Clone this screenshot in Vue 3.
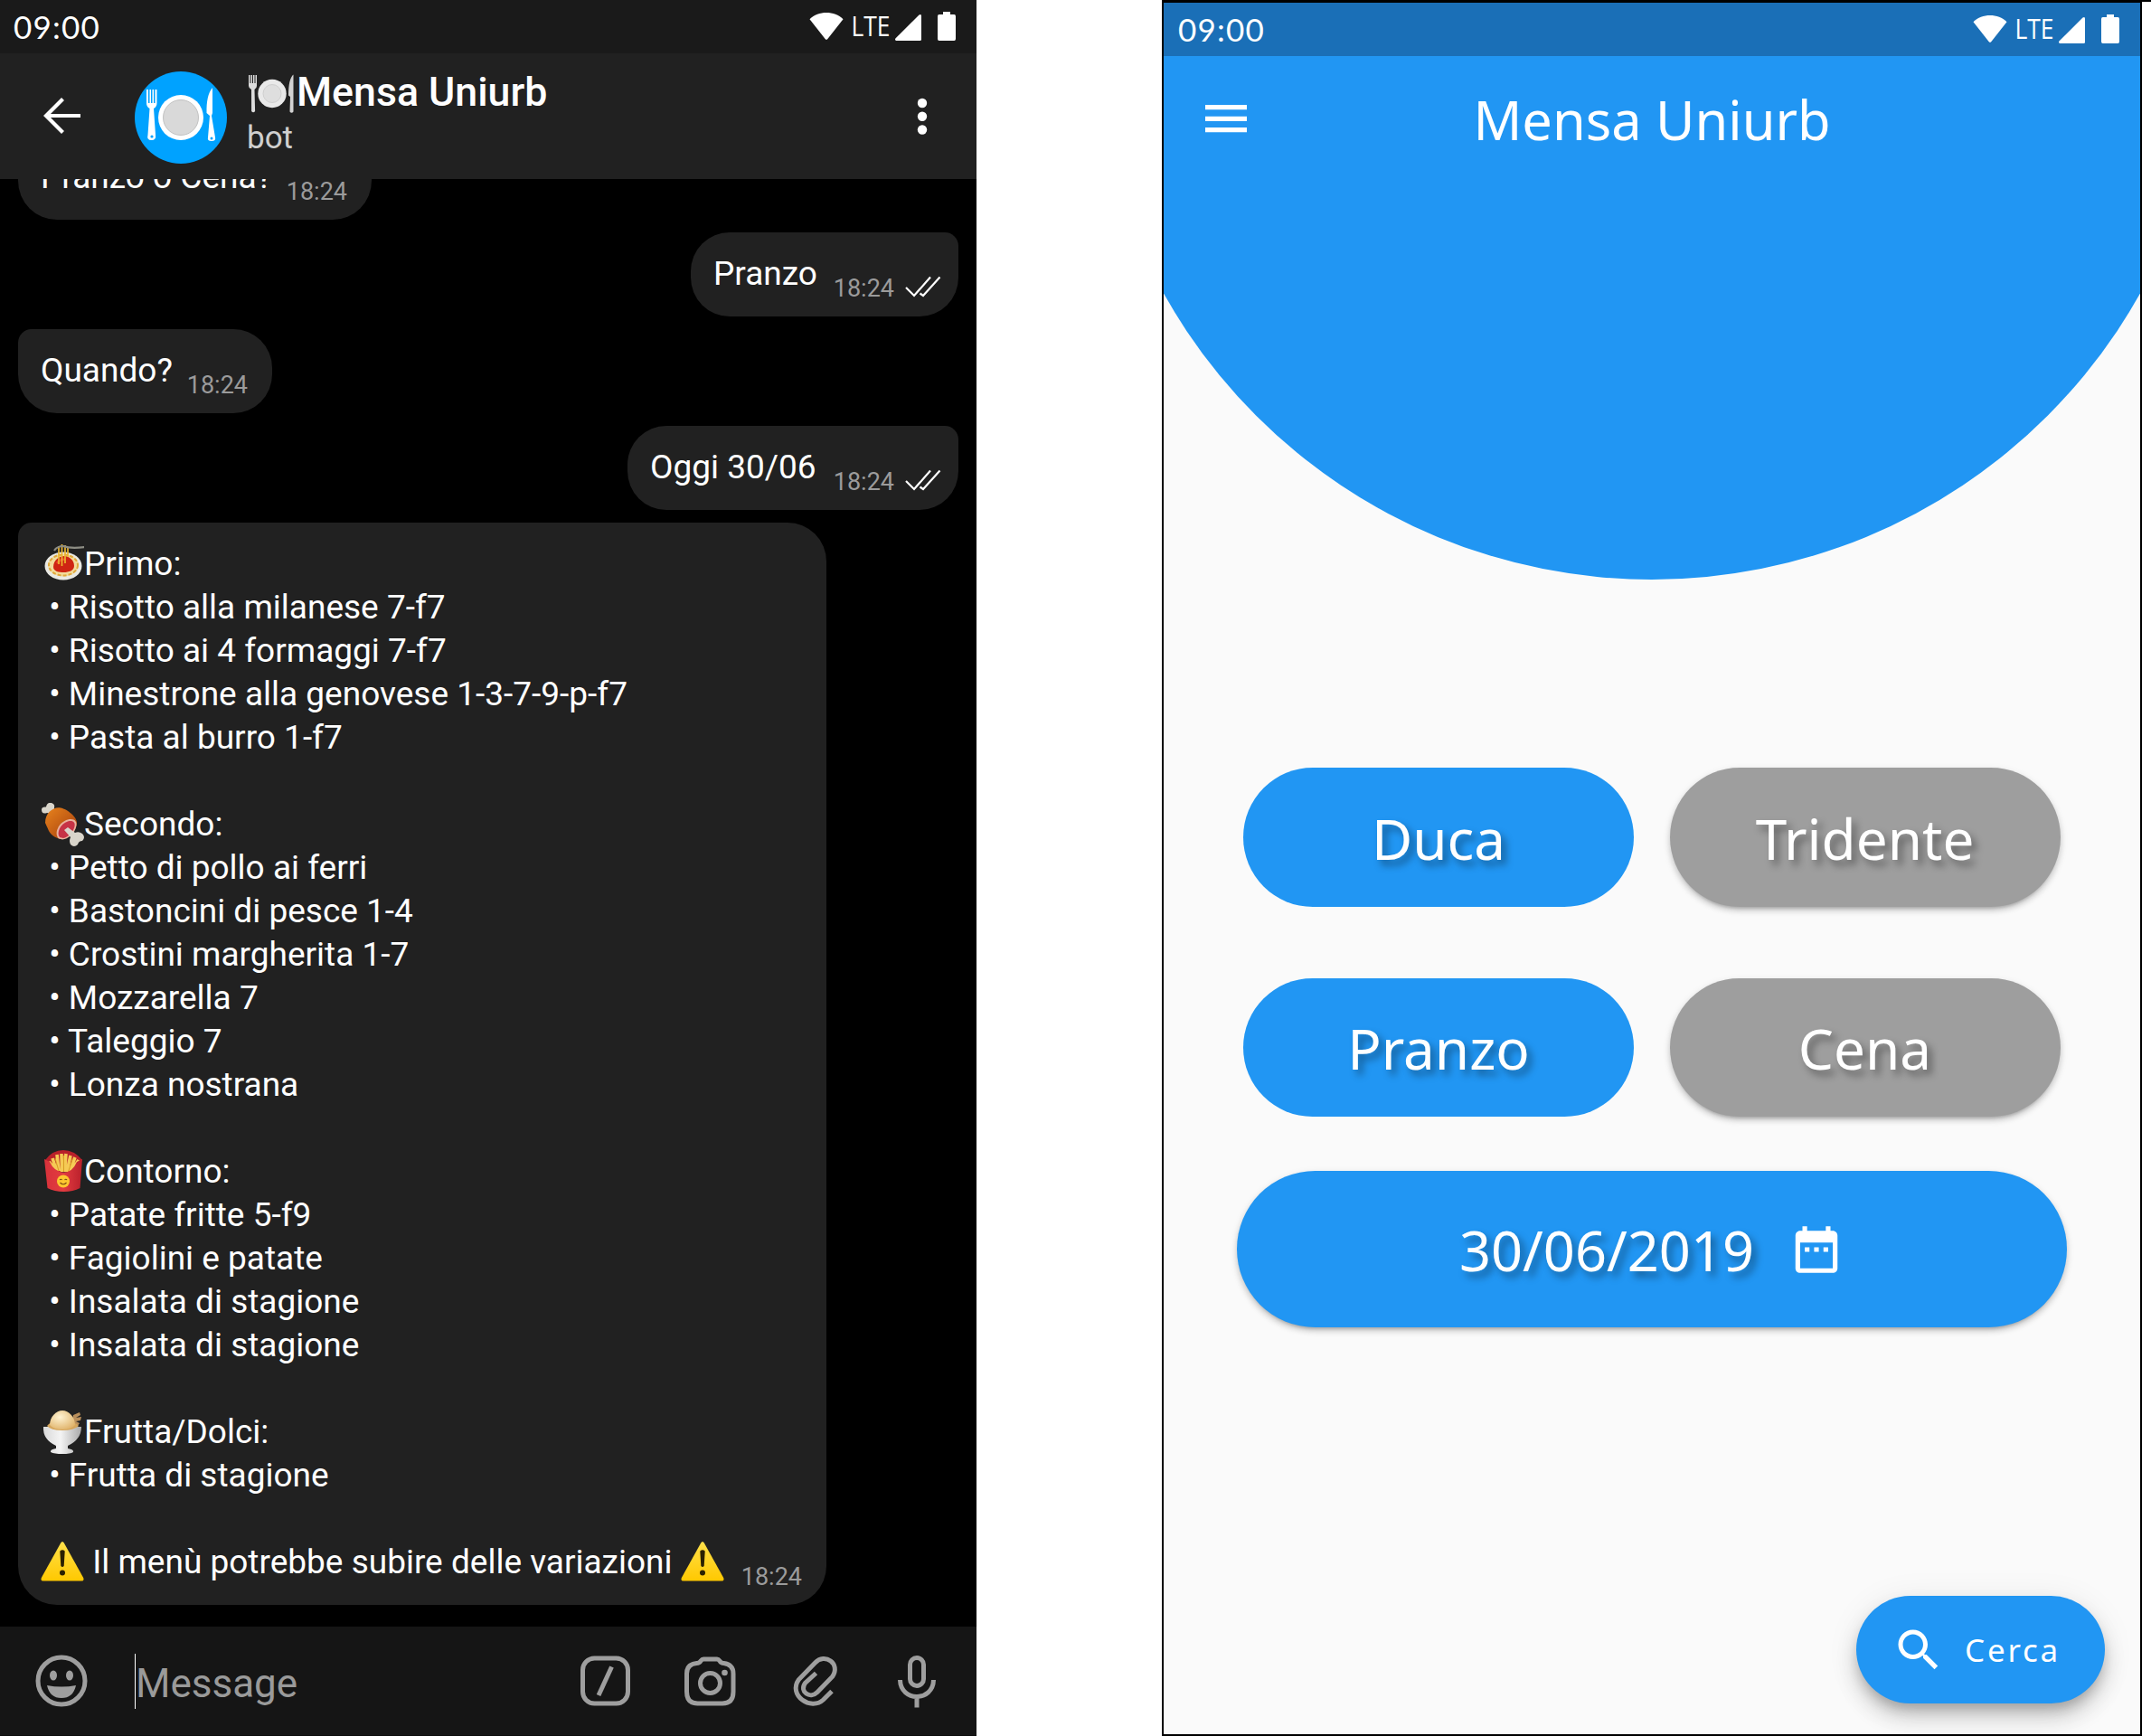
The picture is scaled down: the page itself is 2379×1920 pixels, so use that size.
<script setup>
const sections = [
  {
    icon: 'pasta',
    title: 'Primo:',
    items: [
      'Risotto alla milanese 7-f7',
      'Risotto ai 4 formaggi 7-f7',
      'Minestrone alla genovese 1-3-7-9-p-f7',
      'Pasta al burro 1-f7',
    ],
  },
  {
    icon: 'meat',
    title: 'Secondo:',
    items: [
      'Petto di pollo ai ferri',
      'Bastoncini di pesce 1-4',
      'Crostini margherita 1-7',
      'Mozzarella 7',
      'Taleggio 7',
      'Lonza nostrana',
    ],
  },
  {
    icon: 'fries',
    title: 'Contorno:',
    items: ['Patate fritte 5-f9', 'Fagiolini e patate', 'Insalata di stagione', 'Insalata di stagione'],
  },
  { icon: 'egg', title: 'Frutta/Dolci:', items: ['Frutta di stagione'] },
]
const messages = [
  { text: 'Pranzo o Cena?', mine: false, width: 391 },
  { text: 'Pranzo', mine: true, width: 296 },
  { text: 'Quando?', mine: false, width: 281 },
  { text: 'Oggi 30/06', mine: true, width: 366 },
]
const options = [
  { label: 'Duca', on: true },
  { label: 'Tridente', on: false },
  { label: 'Pranzo', on: true },
  { label: 'Cena', on: false },
]
</script>

<template>
  <div class="page">
    <!-- shared symbols -->
    <svg class="defs" width="0" height="0">
      <defs>
        <linearGradient id="gWarn" x1="0" y1="0" x2="0" y2="1">
          <stop offset="0" stop-color="#ffe04a" /><stop offset="1" stop-color="#ffc800" />
        </linearGradient>
        <linearGradient id="gMeat" x1="0" y1="0" x2="1" y2="1">
          <stop offset="0" stop-color="#e8831d" /><stop offset="1" stop-color="#a33c0c" />
        </linearGradient>
        <linearGradient id="gBox" x1="0" y1="0" x2="1" y2="0">
          <stop offset="0" stop-color="#d8313a" /><stop offset="0.5" stop-color="#e23b40" /><stop offset="1" stop-color="#b9202b" />
        </linearGradient>
        <linearGradient id="gCup" x1="0" y1="0" x2="1" y2="0">
          <stop offset="0" stop-color="#d9d9d9" /><stop offset="0.45" stop-color="#f4f4f4" /><stop offset="1" stop-color="#a9a9a9" />
        </linearGradient>
        <radialGradient id="gEgg" cx="0.4" cy="0.35" r="0.7">
          <stop offset="0" stop-color="#fff3d2" /><stop offset="1" stop-color="#e0b46c" />
        </radialGradient>
        <symbol id="status" viewBox="0 0 180 59">
          <path d="M15.500 21.200C25 11.500 43 11.500 52.500 21.200L35.400 43Q34 44.700 32.600 43Z" />
          <text x="61.500" y="40.300" textLength="43" lengthAdjust="spacingAndGlyphs" class="lte">LTE</text>
          <path d="M111.200 45Q109.300 44.500 110.400 42.500L136.500 16.500Q139 15 139 17.500V43.500Q139 45 137.500 45Z" />
          <path d="M163 13h8v3h4.300q1.700 0 1.700 2v25q0 2-1.700 2h-16.600q-1.700 0-1.700-2v-25q0-2 1.700-2h4.300z" />
        </symbol>
        <symbol id="pasta" viewBox="0 0 48 48">
          <ellipse cx="25" cy="26" rx="20.500" ry="15.500" fill="#e9e9e4" />
          <ellipse cx="25" cy="25" rx="17" ry="12.500" fill="#f3dc9c" />
          <ellipse cx="25" cy="25" rx="16" ry="11.500" fill="none" stroke="#e0a83c" stroke-width="2" stroke-dasharray="4 2" />
          <path d="M14 27C14 19 21 15 26 15s11 4 11 11c0 5-6 7-11.500 7S14 32 14 27Z" fill="#cf2413" />
          <path d="M18 23q4-5 9-4" fill="none" stroke="#ee4a2c" stroke-width="2.500" />
          <path d="M20 4v20M23.500 2v24M27 3v20M30 5v11" fill="none" stroke="#ecb62f" stroke-width="1.700" />
          <path d="M15 9q3-5 10-5 8 3 24 1" fill="none" stroke="#8d8d84" stroke-width="2.200" />
        </symbol>
        <symbol id="meat" viewBox="0 0 48 48">
          <path d="M12 12L7 11Q1 13 1 7.500 1 4 6 4.500 7-1 12 0q4 1.500 3 5l0 6z" fill="#d9d5cb" />
          <path d="M5 22C5 11 14 4 22 5.500S40 16 40 22 35 33 28 39C22 42 13 38 9 31Z" fill="url(#gMeat)" />
          <path d="M20 39.500C14 34 20 21 30 18.500 37 17 40 20 39.500 25 38 34 30 40 24 40.500Z" fill="#e9b29d" />
          <path d="M21 38C17 33 22 23 30 20.500 36 19 38.500 22 37.500 26 36 33 30 38 25 39Z" fill="#c73346" />
          <path d="M26 30l4-3 8 6q4-2 8 1 4 4 0 8-4 0-5 4-4 4-8 0-2-4 0-8z" fill="#d9d5cb" />
        </symbol>
        <symbol id="fries" viewBox="0 0 48 48">
          <path d="M5 11Q13 0 25 0T46 11L38 24H11Z" fill="#b8202a" />
          <path d="M13 9l5 15M18 5l2 18M23 4l.5 20M28 4l-1.500 20M33 6l-4 18M38 8l-6 16M42 11l-8 12M9 13l9 11" stroke="#f5ca55" stroke-width="3.600" />
          <path d="M16 9l4 14M25.500 6v18M35.500 9l-5 15" stroke="#d89d24" stroke-width="1" />
          <path d="M4 10L10 13Q15 24 25 24.500T40 13L46 10 43.500 42Q36 46 25.500 46T7.500 42Z" fill="url(#gBox)" />
          <circle cx="25" cy="34.500" r="7" fill="#fdc62f" />
          <path d="M21 33q1.300-1.500 2.600 0M26.500 33q1.300-1.500 2.600 0M21.500 36q3.500 3.500 7 0" fill="none" stroke="#7b4a10" stroke-width="1.100" />
        </symbol>
        <symbol id="egg" viewBox="0 0 48 48">
          <path d="M36 5l7-3 1 3-5 3 6-1-1 4-5 1 4 2-2 3-6-2z" fill="#b98f5b" />
          <path d="M3 18q-1 14 14 21v3q-7 1-6 4 4 2 13 2t12-2q1-3-6-4v-3q15-7 15-21z" fill="url(#gCup)" />
          <path d="M7 17q3-5 17-5t18 5q-5 5-18 5T7 17Z" fill="#d6a65b" />
          <path d="M10 16C10 7 17 0 24 0s14 7 14 16q-4 5-14 5T10 16Z" fill="url(#gEgg)" />
        </symbol>
        <symbol id="warn" viewBox="0 0 48 48">
          <path d="M22.200 2.500Q24-.5 25.800 2.500L47.200 41Q48.500 44.500 45 44.500H3Q-.5 44.500.8 41Z" fill="url(#gWarn)" />
          <path d="M21.300 11.500q2.700-2.600 5.400 0l-1 16.500q-1.700 2-3.400 0z" fill="#2b2100" />
          <circle cx="24" cy="35.500" r="3" fill="#2b2100" />
        </symbol>
        <symbol id="plate" viewBox="0 0 52 44">
          <path d="M1 2h1.500v9h1V2H5v9h1V2h1.500v9h1V2H10v12q0 2.500-2.500 4l.6 24q-2 2.500-4 0L4 18Q1 16.500 1 14Z" fill="#dcdcdc" />
          <circle cx="27" cy="22.500" r="15.700" fill="#e9e9e9" />
          <circle cx="27" cy="22.500" r="10" fill="#dedede" stroke="#cfcfcf" stroke-width="1" />
          <path d="M50.500 1.500v41q-2 2.500-4 0l.5-16.500-2-1.500Q45 6 50.500 1.500Z" fill="#d2d2d2" />
        </symbol>
      </defs>
    </svg>

    <section class="phone chat">
      <div class="status">
        <span class="clock">09:00</span>
        <svg class="sysicons"><use href="#status" /></svg>
      </div>

      <header class="head">
        <svg class="back" viewBox="0 0 42 42">
          <path d="M41 21H4M21.500 2.500L3 21l18.500 18.500" fill="none" stroke="#fff" stroke-width="4.200" />
        </svg>
        <svg class="avatar" viewBox="0 0 102 102">
          <circle cx="51" cy="51" r="51" fill="#00a2ff" />
          <path d="M13 20h2v15h1.500V20h1.500v15h1.500V20H21v15h1.500V20h2v15q0 4-3.500 6l2 29q1 6-4.500 6t-4-6l2-29Q13 39 13 35Z" fill="#fff" />
          <circle cx="19" cy="72" r="1.600" fill="#00a2ff" />
          <circle cx="51" cy="51" r="25" fill="#fff" />
          <circle cx="51" cy="51" r="19.500" fill="#d9d9d9" stroke="#c2c2c2" stroke-width="1" />
          <path d="M86 18V46l-1 3 4 24q1 4-4 4t-4-4l2-24-3.500-3Q79 26 86 18Z" fill="#fff" />
          <circle cx="85" cy="74" r="1.500" fill="#00a2ff" />
        </svg>
        <div class="who">
          <h1><svg class="plate"><use href="#plate" /></svg>Mensa Uniurb</h1>
          <p>bot</p>
        </div>
        <svg class="more" viewBox="0 0 12 42">
          <circle cx="6" cy="6" r="5.200" /><circle cx="6" cy="20.800" r="5.200" /><circle cx="6" cy="35.500" r="5.200" />
        </svg>
      </header>

      <main class="log">
        <div
          v-for="m in messages"
          :key="m.text"
          class="bubble short"
          :class="{ mine: m.mine }"
          :style="{ width: m.width + 'px' }"
        >
          <span class="line">{{ m.text }}</span>
          <time>18:24</time>
          <svg v-if="m.mine" class="ticks" viewBox="0 0 40 24">
            <path d="M1 13l9 9L28 1.500M16.500 19.500l3.500 2.500L38.500 1.500" fill="none" stroke="#fff" stroke-width="2.200" />
          </svg>
        </div>
        <div class="bubble menu">
          <div v-for="s in sections" :key="s.title" class="group">
            <div class="line"><svg class="emo"><use :href="'#' + s.icon" /></svg>{{ s.title }}</div>
            <div v-for="(it, i) in s.items" :key="i" class="line">{{ ' • ' + it }}</div>
          </div>
          <div class="last">
            <div class="line"><svg class="emo"><use href="#warn" /></svg>{{ ' Il menù potrebbe subire delle variazioni ' }}<svg class="emo"><use href="#warn" /></svg></div>
            <time>18:24</time>
          </div>
        </div>
      </main>

      <footer class="composer">
        <svg class="ico" viewBox="0 0 60 60">
          <circle cx="30" cy="30" r="26" fill="none" stroke="#9e9e9e" stroke-width="5" />
          <ellipse cx="21" cy="24" rx="4" ry="5.500" /><ellipse cx="39" cy="24" rx="4" ry="5.500" />
          <path d="M14 35q16 3 32 0-3 14-16 14T14 35Z" />
        </svg>
        <div class="field">Message</div>
        <svg class="ico stroke" viewBox="0 0 60 60">
          <rect x="5.500" y="5" width="50" height="50" rx="13" /><path d="M37.500 14.500L23 46" />
        </svg>
        <svg class="ico stroke" viewBox="0 0 60 60">
          <path d="M4.500 22q0-10.500 11-11.500 3 0 4.500-2.500 1.500-2 3-2h15q1.500 0 3 2 1.500 2.500 4.500 2.500Q56 12 56 22v20q0 13-12 13H16.500Q4.500 55 4.500 42Z" />
          <circle cx="30.500" cy="32.500" r="11" /><circle cx="46.500" cy="21" r="3.300" class="dot" />
        </svg>
        <svg class="ico stroke clip" viewBox="0 0 60 60">
          <path d="M49 42.500L39.500 52C26 64.500 0 47 12.500 29.500L30.500 11C41-.5 59.500 12 49.500 26.500L33 43.500C25 51.500 12.500 43 19.500 33.500L31.500 22.500" transform="translate(0 -1)" />
        </svg>
        <svg class="ico stroke mic" viewBox="0 0 60 60">
          <rect x="22.500" y="4.500" width="15" height="31" rx="7.500" /><path d="M11.500 29C12 53.500 48 53.500 48.500 29M30 48v11.500" />
        </svg>
      </footer>
    </section>

    <section class="phone app">
      <div class="status">
        <span class="clock">09:00</span>
        <svg class="sysicons"><use href="#status" /></svg>
      </div>
      <div class="disc"></div>
      <header class="bar">
        <svg class="burger" viewBox="0 0 46 31"><path d="M0 0h46v5.300H0zM0 12.700h46v5.300H0zM0 25h46v5.300H0z" /></svg>
        <h2>Mensa Uniurb</h2>
      </header>
      <div class="grid">
        <button v-for="o in options" :key="o.label" :class="{ on: o.on }">{{ o.label }}</button>
      </div>
      <button class="date">
        <span>30/06/2019</span>
        <svg viewBox="0 0 24 24">
          <path d="M9 11H7v2h2v-2zm4 0h-2v2h2v-2zm4 0h-2v2h2v-2zm2-7h-1V2h-2v2H8V2H6v2H5c-1.110 0-1.990.9-1.990 2L3 20c0 1.100.89 2 2 2h14c1.100 0 2-.9 2-2V6c0-1.100-.9-2-2-2zm0 16H5V9h14v11z" />
        </svg>
      </button>
      <button class="fab">
        <svg viewBox="0 0 24 24">
          <path d="M15.500 14h-.79l-.28-.27C15.410 12.590 16 11.110 16 9.500 16 5.910 13.090 3 9.500 3S3 5.910 3 9.500 5.910 16 9.500 16c1.610 0 3.090-.59 4.230-1.570l.27.28v.79l5 4.990L20.490 19l-4.990-5zm-6 0C7.010 14 5 11.990 5 9.500S7.010 5 9.500 5 14 7.010 14 9.500 11.990 14 9.500 14z" />
        </svg>
        <span>Cerca</span>
      </button>
    </section>
    <div class="edge"></div>
  </div>
</template>

<style>
body { background: #fff; }
</style>

<style scoped>
.page { display: flex; width: 2379px; height: 1920px; overflow: hidden; background: #fff; }
.defs { position: absolute; }
.phone { box-sizing: border-box; display: flex; flex-direction: column; height: 1920px; overflow: hidden; }
h1, h2, p { margin: 0; font-weight: 400; }
.status { display: flex; align-items: flex-start; justify-content: space-between; height: 59px; flex: none; padding: 0 20px 0 15px; color: #fff; }
.clock { font: 35px/58px Lato, sans-serif; letter-spacing: 1.2px; }
.sysicons { width: 180px; height: 59px; fill: #fff; }
.lte { font: 31px "Open Sans", sans-serif; }

.chat { width: 1080px; background: #000; color: #fff; font-family: Roboto, sans-serif; }
.chat .status { background: #1a1a1a; }
.head { display: flex; align-items: center; height: 139px; flex: none; background: #212121; padding: 0 54px 0 48px; box-sizing: border-box; z-index: 1; }
.back { width: 42px; height: 42px; margin-top: -1px; }
.avatar { width: 102px; height: 102px; margin: 3px 0 0 59px; }
.who { margin: 0 auto 0 22px; }
.who h1 { display: flex; font-size: 44.700px; line-height: 50px; margin-top: -2px; font-weight: 500; }
.who p { font-size: 35px; line-height: 50px; margin-top: 1px; color: #cfcfcf; }
.plate { width: 52px; height: 44px; margin: 4px 2px 0 1px; }
.more { width: 12px; height: 42px; fill: #fff; }

.log { flex: 1; min-height: 0; display: flex; flex-direction: column; justify-content: flex-end; align-items: flex-start; gap: 14px; padding: 0 20px 24px; }
.bubble { box-sizing: border-box; flex: none; background: #212121; border-radius: 15px 43px 43px 43px; padding: 22px 27px 23px 25px; }
.line { display: block; height: 48px; font-size: 37px; line-height: 48px; white-space: pre; }
.short, .last { display: flex; }
.short.mine { align-self: flex-end; border-radius: 43px 15px 43px 43px; padding-right: 19px; }
time { margin: 22px 0 -10px auto; font-size: 27px; line-height: 36px; color: #9b9b9b; }
.ticks { width: 40px; height: 24px; margin: 26px 0 -4px 12px; }
.menu { width: 894px; }
.group { margin-bottom: 48px; }
.emo { width: 48px; height: 48px; vertical-align: top; }

.composer { display: flex; align-items: center; height: 121px; flex: none; box-sizing: border-box; background: #151515; border-bottom: 1px solid #0c0c0c; padding: 0 36px 0 38px; }
.ico { width: 60px; height: 60px; fill: #9e9e9e; margin-left: 56px; }
.ico:first-child { margin-left: 0; }
.mic { margin-left: 53px; }
.stroke { fill: none; stroke: #9e9e9e; stroke-width: 5; }
.stroke .dot { fill: #9e9e9e; stroke: none; }
.field { flex: 1; margin-left: 51px; height: 61px; border-left: 1px solid #fff; font-size: 44px; line-height: 66px; color: #9a9a9a; }

.app { position: relative; width: 1084px; margin-left: 205px; border: 2px solid #000; border-top-width: 3px; background: #fafafa; color: #fff; font-family: "Noto Sans", sans-serif; }
.app .status { background: #1a6fb7; z-index: 1; padding-left: 16px; }
/* large circle peeking below the app bar */
.disc { position: absolute; left: -79.400px; top: -600.800px; width: 1238.800px; height: 1238.800px; border-radius: 50%; background: #2196f3; }
.bar { position: relative; display: grid; grid-template-columns: 46px 1fr 46px; align-items: center; height: 139px; padding: 0 46px; flex: none; }
.burger { width: 46px; height: 31px; fill: #fff; }
.bar h2 { font-size: 59.500px; line-height: 80px; text-align: center; }
.grid { display: grid; grid-template-columns: 432px 432px; grid-auto-rows: 153.500px; gap: 79px 39.500px; margin: 648px 0 0 88px; }
button { border: 0; color: #fff; font: 62px/80px "Noto Sans", sans-serif; background: #9e9e9e; }
.grid button { border-radius: 77px; padding: 2px 0 0; text-shadow: 5px 6px 8px rgba(0, 0, 0, 0.4); box-shadow: 0 6px 3px -4px rgba(0, 0, 0, 0.14), 0 4px 6px rgba(0, 0, 0, 0.14), 0 3px 10px rgba(0, 0, 0, 0.1); }
.grid .on { background: #2196f3; box-shadow: none; }
.date { display: flex; align-items: center; justify-content: center; gap: 38px; width: 918px; height: 173px; flex: none; margin: 60px 0 0 81px; padding: 0; border-radius: 87px; background: #2196f3; font-size: 61.300px; box-shadow: 0 6px 3px -4px rgba(0, 0, 0, 0.14), 0 4px 6px rgba(0, 0, 0, 0.14), 0 3px 10px rgba(0, 0, 0, 0.1); }
.date span { padding-top: 1px; text-shadow: 5px 6px 8px rgba(0, 0, 0, 0.4); }
.date svg { width: 62px; height: 62px; fill: #fff; }
.fab { display: flex; align-items: center; align-self: flex-end; width: 275px; height: 119px; flex: none; margin: auto 39px 34px 0; padding: 0 0 0 39px; border-radius: 60px; background: #2196f3; font-size: 35px; letter-spacing: 2.800px; box-shadow: 0 9px 13px -3px rgba(0, 0, 0, 0.2), 0 16px 24px rgba(0, 0, 0, 0.16), 0 4px 36px rgba(0, 0, 0, 0.08); }
.fab svg { width: 60px; height: 60px; fill: #fff; }
.fab span { margin-left: 21px; padding-top: 1px; }
.edge { width: 10px; height: 2px; background: #000; }
</style>
